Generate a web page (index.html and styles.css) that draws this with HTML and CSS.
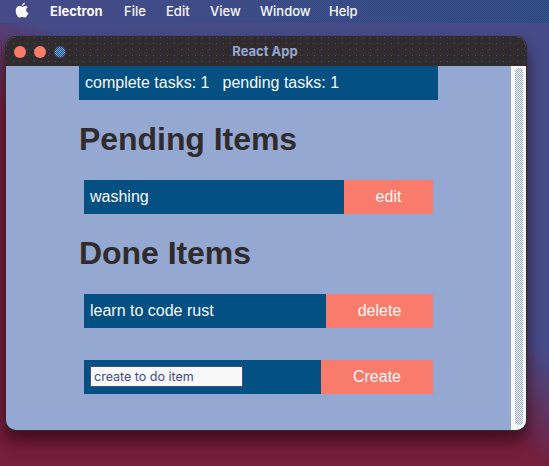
FILE: index.html
```html
<!DOCTYPE html>
<html lang="en">
<head>
<meta charset="utf-8">
<title>React App</title>
<link rel="stylesheet" href="styles.css">
</head>
<body>
<nav class="menubar">
  <svg class="apple" width="14" height="17" viewBox="0 0 14 17"><path fill="currentColor" d="M9.9 0.4C10 1.9 8.700 3.700 7 3.700C6.900 2.200 8.200 0.600 9.900 0.400ZM7.100 4.700C7.800 4.700 8.700 3.900 10.100 3.900C11.200 3.900 12.200 4.400 12.800 5.300C10.400 6.700 10.700 10.100 13.400 11.100C12.800 12.800 11.500 15.500 10 15.500C9 15.500 8.500 14.900 7.300 14.900C6.100 14.900 5.600 15.500 4.600 15.500C2.700 15.500 0.700 11.900 0.700 8.700C0.700 5.600 2.500 4 4.300 4C5.500 4 6.400 4.700 7.100 4.700Z"/></svg>
  <span class="menu app">Electron</span>
  <span class="menu file">File</span>
  <span class="menu edit">Edit</span>
  <span class="menu view">View</span>
  <span class="menu win">Window</span>
  <span class="menu">Help</span>
</nav>
<main class="window">
  <header class="titlebar">
    <div class="lights"><i class="light"></i><i class="light"></i><i class="light zoom"></i></div>
    <span class="title">React App</span>
  </header>
  <div class="body">
    <div class="content">
      <div class="summary"><span>complete tasks: 1</span><span>pending tasks: 1</span></div>
      <h1>Pending Items</h1>
      <div class="item"><span class="label">washing</span><button class="edit-btn">edit</button></div>
      <h1>Done Items</h1>
      <div class="item"><span class="label">learn to code rust</span><button class="delete-btn">delete</button></div>
      <div class="item create"><span class="label"><input type="text" placeholder="create to do item"></span><button class="create-btn">Create</button></div>
    </div>
    <div class="scrollbar"><div class="thumb"></div></div>
  </div>
</main>
</body>
</html>
```
FILE: styles.css
```css
* { box-sizing: border-box; }
body {
  margin: 0;
  width: 549px;
  height: 466px;
  overflow: hidden;
  font: 16px "Liberation Sans", Arial, sans-serif;
  background: linear-gradient(213deg, #464b88 43%, #761e3c 57%);
}
.menubar {
  display: flex;
  height: 23px;
  padding-left: 15px;
  color: #f8f8f8;
  font: 500 13px/23px Inter, sans-serif;
  background:
    linear-gradient(90deg, #464b88, rgba(70, 75, 136, 0.35)),
    repeating-conic-gradient(#464b88 0 25%, #045082 0 50%) 0 0 / 2px 2px;
}
.apple { margin: 2px 21px 0 0; flex: none; }
.menu { flex: none; }
.app { width: 74px; font-weight: 700; }
.file { width: 42px; }
.edit { width: 44px; }
.view { width: 50px; }
.win { width: 69px; }
.window {
  width: 520px;
  height: 393px;
  margin: 14px 0 0 6px;
  border-radius: 10px;
  overflow: hidden;
  background: #95a8d2;
  box-shadow: 0 0 0 1px #302b2d, 0 10px 14px 2px rgba(40, 5, 14, 0.62);
}
.titlebar {
  display: grid;
  grid-template-columns: 1fr auto 1fr;
  align-items: center;
  height: 29px;
  padding-right: 2px;
  background:
    conic-gradient(from 0deg at 1px 1px, transparent 75%, #464b88 0) 0 0 / 7px 6px,
    conic-gradient(from 0deg at 1px 1px, transparent 75%, #6b1e3c 0) 3px 2px / 8px 7px,
    #302b2d;
}
.lights { display: flex; gap: 8px; padding-left: 8px; }
.light { width: 12px; height: 12px; border-radius: 50%; background: #f87b6b; }
.zoom { background: repeating-conic-gradient(#045082 0 25%, #95a8d2 0 50%) 0 0 / 2px 2px; border: 1px solid #464b88; }
.title { color: #95a8d2; font: 700 13px/29px Inter, sans-serif; }
.body { display: flex; height: 364px; }
.content { width: 505px; padding: 0 73px; }
.summary {
  display: flex;
  gap: 13px;
  width: 359px;
  height: 34px;
  padding-left: 6px;
  line-height: 34px;
  color: #f8f8f8;
  background: #045082;
}
h1 {
  margin: 21px 0 0;
  height: 37px;
  font-size: 32px;
  line-height: 37px;
  letter-spacing: -0.05px;
  color: #302b2d;
}
.item {
  display: flex;
  width: 349px;
  height: 34px;
  margin: 22px 0 0 5px;
  color: #f8f8f8;
  background: #045082;
}
.create { margin-top: 32px; }
.label { flex: 1; padding-left: 6px; line-height: 34px; }
button {
  flex: none;
  padding: 0;
  border: 0;
  color: #f8f8f8;
  font: 16px/34px "Liberation Sans", Arial, sans-serif;
  background: #f87b6b;
}
.edit-btn { width: 89px; }
.delete-btn { width: 107px; }
.create-btn { width: 112px; }
input {
  display: block;
  width: 153px;
  height: 21px;
  margin-top: 6px;
  padding: 0 3px;
  border: 1px solid #464b88;
  font: 12.5px Inter, sans-serif;
  background: #f8f8f8;
}
input::placeholder { color: #464b88; opacity: 1; }
.scrollbar { flex: 1; padding: 2px 3px 5px 4px; background: #f8f8f8; }
.thumb {
  height: 100%;
  border-radius: 4px;
  background: repeating-conic-gradient(#95a8d2 0 25%, #f8f8f8 0 50%) 0 0 / 2px 2px;
}
```
